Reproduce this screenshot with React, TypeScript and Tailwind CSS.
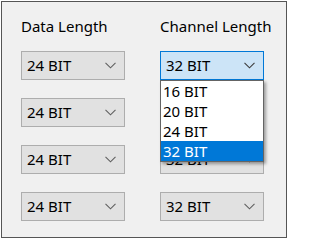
import React from "react";

const Chevron = ({ dark }: { dark?: boolean }) => (
  <svg width="11" height="7" viewBox="0 0 11 7" className="shrink-0">
    <path d="M0.5 0.8 L5.5 5.8 L10.5 0.8" fill="none" stroke={dark ? "#3c3c3c" : "#606060"} strokeWidth="1.1" />
  </svg>
);

const Combo = ({ value, active }: { value: string; active?: boolean }) => (
  <div
    className={
      active
        ? "h-[29px] w-[104px] border border-[#0078d7] bg-[#cce4f7] flex items-center justify-between pl-[5px] pr-[8px]"
        : "h-[29px] w-[104px] border border-[#adadad] bg-[#e1e1e1] flex items-center justify-between pl-[5px] pr-[8px]"
    }
  >
    <span className="text-[15px] leading-none text-black">{value}</span>
    <Chevron dark={active} />
  </div>
);

export default function App() {
  const items = ["16 BIT", "20 BIT", "24 BIT", "32 BIT"];
  return (
    <div
      className="w-[288px] h-[239px] bg-white p-px"
      style={{ fontFamily: '"Noto Sans", "Open Sans", sans-serif' }}
    >
      <div className="relative h-full w-full border border-[#555555] bg-[#f0f0f0] pl-[19px] pt-[14px]">
        <div className="flex gap-[35px]">
          <div className="flex flex-col">
            <div className="h-[20px] text-[15px] leading-[20px] text-black">Data Length</div>
            <div className="mt-[15px] flex flex-col gap-[18px]">
              <Combo value="24 BIT" />
              <Combo value="24 BIT" />
              <Combo value="24 BIT" />
              <Combo value="24 BIT" />
            </div>
          </div>
          <div className="flex flex-col">
            <div className="h-[20px] text-[15px] leading-[20px] text-black">Channel Length</div>
            <div className="relative mt-[15px] flex flex-col gap-[18px]">
              <Combo value="32 BIT" active />
              <Combo value="32 BIT" />
              <Combo value="32 BIT" />
              <Combo value="32 BIT" />
              <div className="absolute left-0 top-[29px] w-[104px] border border-[#646464] bg-white shadow-[2px_2px_3px_rgba(0,0,0,0.35)]">
                {items.map((it) => (
                  <div
                    key={it}
                    className={
                      it === "32 BIT"
                        ? "h-[20px] bg-[#0078d7] pl-[2px] text-[15px] leading-[20px] text-white"
                        : "h-[20px] pl-[2px] text-[15px] leading-[20px] text-black"
                    }
                  >
                    {it}
                  </div>
                ))}
              </div>
            </div>
          </div>
        </div>
      </div>
    </div>
  );
}
